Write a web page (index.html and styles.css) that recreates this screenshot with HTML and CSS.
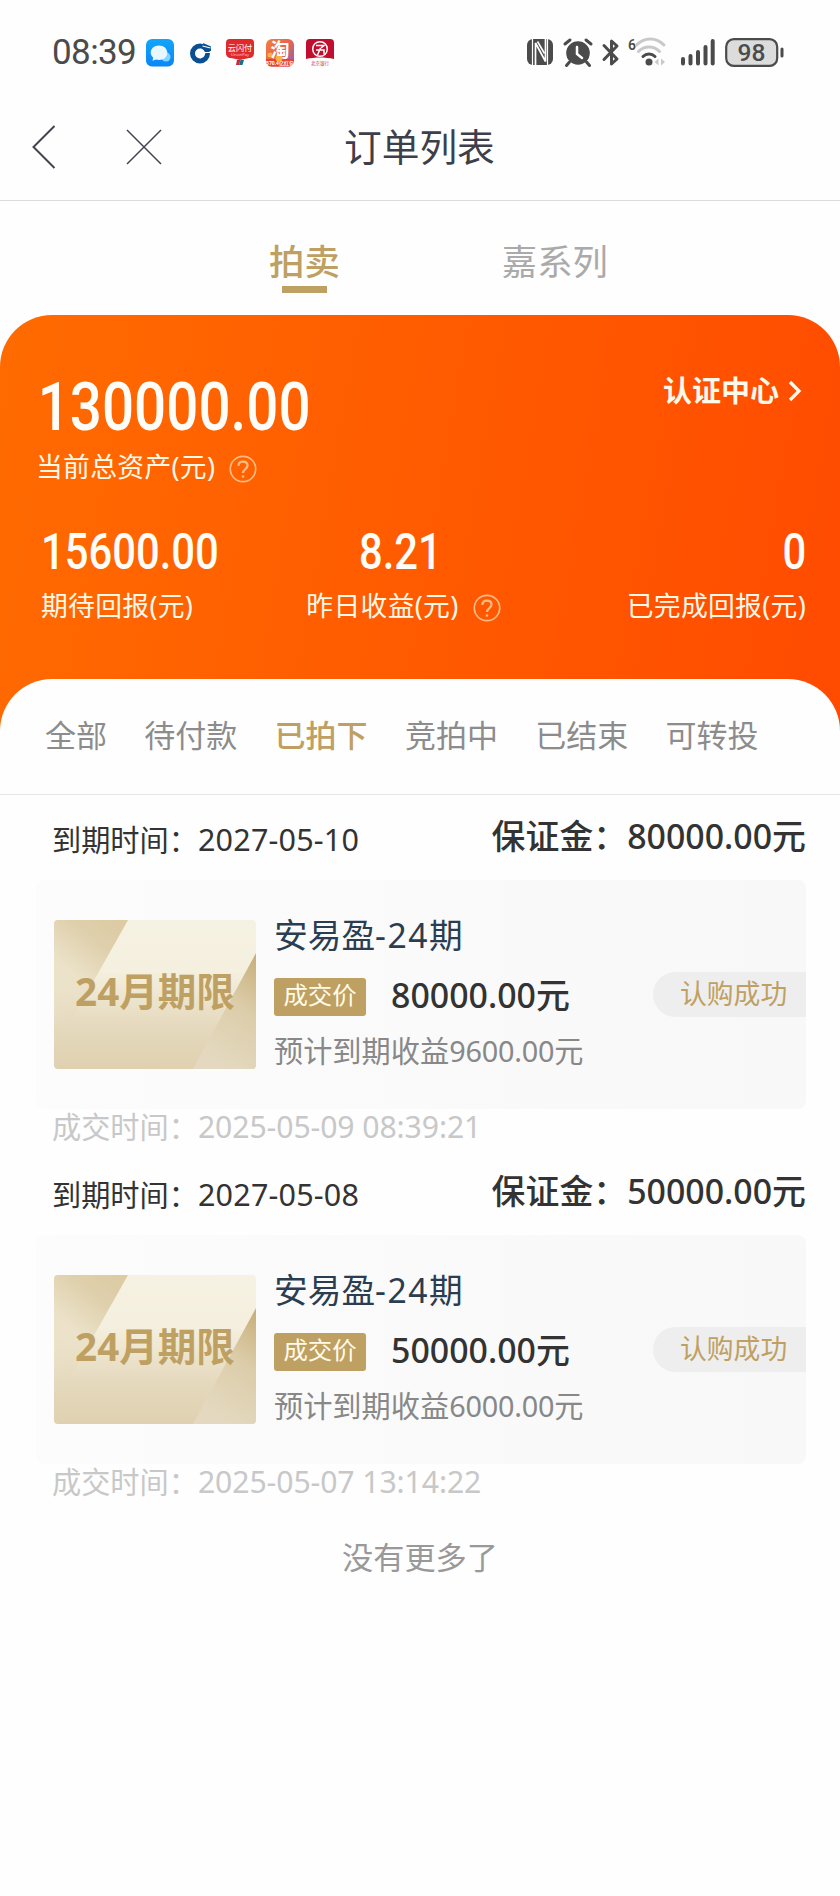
FILE: index.html
```html
<!DOCTYPE html>
<html lang="zh-CN">
<head>
<meta charset="utf-8">
<title>订单列表</title>
<link rel="stylesheet" href="styles.css">
</head>
<body>
<div class="status">
  <span class="clock">08:39</span>
  <svg class="apps" width="190" height="30" viewBox="145 38 190 30">
    <defs>
      <linearGradient id="msg" x1="0" y1="0" x2="0" y2="1"><stop offset="0" stop-color="#12a5fb"/><stop offset="1" stop-color="#0a86f5"/></linearGradient>
      <linearGradient id="tao" x1="0" y1="0" x2="1" y2="1"><stop offset="0" stop-color="#f2803c"/><stop offset=".45" stop-color="#e9654c"/><stop offset="1" stop-color="#8a5fc4"/></linearGradient>
    </defs>
    <rect x="146" y="39" width="28" height="27.500" rx="6" fill="url(#msg)"/>
    <circle cx="166" cy="57" r="4.500" fill="#7ed6ff"/>
    <path d="M159 45.500c5 0 8.300 3.200 8.300 7.300s-3.300 7.200-8.300 7.200c-1 0-1.900-.1-2.800-.4l-3.700 1.200.7-3.200c-1.600-1.300-2.500-3-2.500-4.800 0-4.100 3.300-7.300 8.300-7.300z" fill="#e9f7ff"/>
    <circle cx="200" cy="53.500" r="7.500" fill="none" stroke="#0b4f93" stroke-width="5"/>
    <path d="M200.500 48.500l5 5-5 5-5-5z" fill="#fff"/>
    <path d="M203 43l8 3.500v4.500h-6z" fill="#0b4f93"/>
    <path d="M202.500 46l8 2M204 52.500h7" stroke="#fff" stroke-width="1.100"/>
    <path d="M230 39h20c3 0 4 1.500 4 4v10c0 3.500-2 5-5 5l-9 2-9-2c-3 0-5-1.500-5-5V43c0-2.500 1-4 4-4z" fill="#df2a2c"/>
    <path d="M237 60h3.500l-1.500 5h-3z" fill="#c9283a"/><path d="M240.500 60h3.500l-1.500 5H239z" fill="#16728a"/>
    <text x="240" y="51" text-anchor="middle" font-size="8.200" fill="#fff">云闪付</text>
    <text x="240" y="56" text-anchor="middle" font-size="4" fill="#ffc9c4">UnionPay</text>
    <rect x="266" y="39" width="28" height="27.500" rx="6" fill="url(#tao)"/>
    <path d="M266 59h28v2a5.500 5.500 0 0 1-5.500 5.500h-17A5.500 5.500 0 0 1 266 61z" fill="#e8432b"/>
    <circle cx="279" cy="58" r="3.500" fill="#f9b23f"/><circle cx="270" cy="55" r="2.500" fill="#f9b23f"/>
    <text x="280" y="56.500" text-anchor="middle" font-size="19" font-weight="700" fill="#fff">淘</text>
    <text x="280" y="65" text-anchor="middle" font-size="5" font-weight="700" fill="#fff">570.4亿红包</text>
    <path d="M310 39h20c3 0 4 1.500 4 4v16c-9-2-19-2-28 0V43c0-2.500 1-4 4-4z" fill="#c30d2e"/>
    <circle cx="320" cy="49" r="7.300" fill="none" stroke="#fff" stroke-width="1.500"/>
    <path d="M316 45.500h8l-3 2.500M320.500 48l-3 7M320 50h4v4M316 50h3" fill="none" stroke="#fff" stroke-width="1.500"/>
    <text x="320" y="65" text-anchor="middle" font-size="4.500" fill="#c33">北京银行</text>
  </svg>
  <svg class="sys" width="262" height="32" viewBox="525 36 262 32">
    <rect x="527" y="39" width="26" height="26" rx="6" fill="#4b4b4b"/>
    <path d="M532.500 65V39" stroke="#fff" stroke-width="1.200" fill="none"/>
    <path d="M547.500 39v26" stroke="#fff" stroke-width="1.200" fill="none"/>
    <path d="M535.500 65V43l10 18.500V39" stroke="#fff" stroke-width="1.700" fill="none"/>
    <path d="M537.500 41.500l7 12" stroke="#fff" stroke-width="1.600" fill="none"/>
    <circle cx="578" cy="53" r="11.800" fill="#4b4b4b"/>
    <path d="M565 44l5-4M591 44l-5-4M569.500 62l-3 3.500M586.500 62l3 3.500" stroke="#4b4b4b" stroke-width="3" stroke-linecap="round"/>
    <path d="M577 47v7l5 4" stroke="#fff" stroke-width="2.500" fill="none" stroke-linecap="round"/>
    <path d="M604 45.500l13 13.500-5.500 5V41l5.500 5L604 59.500" stroke="#4b4b4b" stroke-width="3" fill="none" stroke-linejoin="round" stroke-linecap="round"/>
    <text x="628" y="50" font-size="15.500" font-weight="600" fill="#4b4b4b" class="num" textLength="8" lengthAdjust="spacingAndGlyphs">6</text>
    <path d="M637 46a18.500 18.500 0 0 1 27.500 0" transform="translate(-.5 -1)" stroke="#c9c9c9" stroke-width="3" fill="none" stroke-linecap="round"/>
    <path d="M638.500 51.500a14.500 14.500 0 0 1 21 0" stroke="#c9c9c9" stroke-width="3" fill="none" stroke-linecap="round"/>
    <path d="M643 56.500a8.500 8.500 0 0 1 12 0" stroke="#4b4b4b" stroke-width="3" fill="none" stroke-linecap="round"/>
    <circle cx="649" cy="62" r="3.500" fill="#4b4b4b"/>
    <path d="M658.500 58.500v7l-4-3.500zM661 58.500v7l4-3.500z" fill="#c9c9c9"/>
    <path d="M683 59v4.500M690.500 56v7.500M698 52v11.500M705.500 47v16.500M712.700 41v22.500" stroke="#4b4b4b" stroke-width="4" stroke-linecap="round"/>
    <rect x="726.200" y="39.200" width="51" height="26.600" rx="7.500" fill="#dcdcdc" stroke="#4b4b4b" stroke-width="2.200"/>
    <path d="M782 49v7" stroke="#4b4b4b" stroke-width="3" stroke-linecap="round"/>
    <text x="751.500" y="61" text-anchor="middle" font-size="24.500" font-weight="500" fill="#4b4b4b" class="num">98</text>
  </svg>
</div>

<header class="head">
  <svg class="nav" width="136" height="46" viewBox="30 124 136 46">
    <path d="M54.500 126L33.500 147L54.500 168" fill="none" stroke="#44444f" stroke-width="2"/>
    <path d="M127 130l34 34M161 130l-34 34" stroke="#44444f" stroke-width="1.500"/>
  </svg>
  <h1 class="title">订单列表</h1>
</header>

<nav class="tabs">
  <span class="tab tab-on">拍卖</span>
  <span class="tab">嘉系列</span>
</nav>

<section class="assets">
  <div class="total">
    <div>
      <div class="big">130000.00</div>
      <div class="cap">当前总资产(元)<svg class="help" width="28" height="28" viewBox="0 0 28 28"><circle cx="14" cy="14" r="12.700"/><path d="M9.300 10.800c.2-2.700 2-4.200 4.600-4.200 2.700 0 4.600 1.600 4.600 4 0 3.400-4.500 3.900-4.500 7.300"/><circle class="dot" cx="14" cy="21.500" r="1.300"/></svg></div>
    </div>
    <div class="cert">认证中心<svg width="14" height="22" viewBox="0 0 14 22"><path d="M2 2l9 9-9 9" fill="none" stroke="#fff8ec" stroke-width="3.300"/></svg></div>
  </div>
  <div class="stats">
    <div class="stat s1"><div class="mid">15600.00</div><div class="cap">期待回报(元)</div></div>
    <div class="stat s2"><div class="mid">8.21</div><div class="cap">昨日收益(元)<svg class="help" width="28" height="28" viewBox="0 0 28 28"><circle cx="14" cy="14" r="12.700"/><path d="M9.300 10.800c.2-2.700 2-4.200 4.600-4.200 2.700 0 4.600 1.600 4.600 4 0 3.400-4.500 3.900-4.500 7.300"/><circle class="dot" cx="14" cy="21.500" r="1.300"/></svg></div></div>
    <div class="stat s3"><div class="mid">0</div><div class="cap">已完成回报(元)</div></div>
  </div>
</section>

<nav class="filters">
  <span>全部</span><span>待付款</span><span class="on">已拍下</span><span>竞拍中</span><span>已结束</span><span>可转投</span>
</nav>

<main class="list">
  <article class="order">
    <div class="row">
      <span class="due">到期时间：<b class="d">2027-05-10</b></span>
      <span class="dep">保证金：<b class="d">80000.00</b>元</span>
    </div>
    <div class="card">
      <div class="thumb"><svg class="art" width="202" height="149" viewBox="0 0 202 149"><use href="#art"/></svg><span>24月期限</span></div>
      <div class="info">
        <div class="name">安易盈<b class="d">-24</b>期</div>
        <div class="deal"><span class="tag">成交价</span><span class="price"><b class="d">80000.00</b>元</span></div>
        <div class="est">预计到期收益<b class="d">9600.00</b>元</div>
      </div>
      <span class="state">认购成功</span>
    </div>
    <div class="time">成交时间：<b class="d">2025-05-09 08:39:21</b></div>
  </article>
  <article class="order">
    <div class="row">
      <span class="due">到期时间：<b class="d">2027-05-08</b></span>
      <span class="dep">保证金：<b class="d">50000.00</b>元</span>
    </div>
    <div class="card">
      <div class="thumb"><svg class="art" width="202" height="149" viewBox="0 0 202 149"><use href="#art"/></svg><span>24月期限</span></div>
      <div class="info">
        <div class="name">安易盈<b class="d">-24</b>期</div>
        <div class="deal"><span class="tag">成交价</span><span class="price"><b class="d">50000.00</b>元</span></div>
        <div class="est">预计到期收益<b class="d">6000.00</b>元</div>
      </div>
      <span class="state">认购成功</span>
    </div>
    <div class="time">成交时间：<b class="d">2025-05-07 13:14:22</b></div>
  </article>
  <p class="end">没有更多了</p>
</main>

<svg class="defs" width="0" height="0">
  <defs>
    <linearGradient id="ga" x1="0" y1="0" x2="0" y2="1"><stop offset="0" stop-color="#f6f2e3"/><stop offset=".35" stop-color="#f4efde"/><stop offset=".72" stop-color="#e5d9bd"/><stop offset="1" stop-color="#dfd1b0"/></linearGradient>
    <linearGradient id="gb" x1=".85" y1="0" x2=".35" y2="1"><stop offset="0" stop-color="#dccba3"/><stop offset=".25" stop-color="#dfd0ac"/><stop offset=".6" stop-color="#ebe2c9"/><stop offset="1" stop-color="#e2d5b6" stop-opacity="0"/></linearGradient>
    <linearGradient id="gc" x1=".9" y1="0" x2=".5" y2="1"><stop offset="0" stop-color="#c8b07c"/><stop offset=".45" stop-color="#dccdaa"/><stop offset="1" stop-color="#e4d9c0"/></linearGradient>
    <g id="art">
      <path d="M0 0h202v149H0z" fill="url(#ga)"/>
      <path d="M0 0h74L12 110 0 120z" fill="url(#gb)"/>
      <path d="M202 33v116h-63z" fill="url(#gc)"/>
    </g>
  </defs>
</svg>
</body>
</html>
```
FILE: styles.css
```css
* { box-sizing: border-box; }
body {
  margin: 0;
  width: 840px;
  height: 1896px;
  background: #fefefe;
  color: #333;
  font-family: "Noto Sans", "Noto Sans CJK SC", sans-serif;
  overflow: hidden;
}
svg { display: block; flex: none; }
.defs { height: 0; }
.num { font-family: Roboto, sans-serif; }

.status { display: flex; height: 94px; padding: 0 0 0 52px; }
.clock { width: 93px; padding-top: 32px; font: 400 35px/42px Roboto, sans-serif; letter-spacing: -.6px; color: #4b4b4b; white-space: nowrap; }
.apps { margin-top: 38px; }
.sys { margin: 36px 0 0 190px; }

.head { display: flex; align-items: center; height: 107px; padding-left: 30px; border-bottom: 1px solid #dcdcdc; }
.title { margin: 0 0 0 178px; font-size: 37.7px; font-weight: 400; line-height: 50px; color: #3f3f4b; }

.tabs { display: flex; height: 114px; padding: 40px 0 0 269px; gap: 162px; }
.tab { font-size: 35.4px; line-height: 40px; color: #aaa; }
.tab-on { color: #bfa063; font-weight: 500; }
.tab-on::after { content: ""; display: block; width: 45px; height: 7px; margin: 5px auto 0; background: #bfa063; }

.assets {
  height: 430px;
  padding: 55px 34px 0 36px;
  border-radius: 52px 52px 0 0;
  background: linear-gradient(100deg, #ff6b00, #ff4b00);
  color: #fff9e9;
}
.total { display: flex; justify-content: space-between; }
.big, .mid { font-family: Roboto, sans-serif; font-weight: 500; color: #fffdf8; transform-origin: 0 50%; white-space: nowrap; }
.big { font-size: 67px; line-height: 74px; height: 72px; transform: scaleX(.844); padding-left: 2px; width: 330px; }
.cap { display: flex; align-items: center; font-size: 26.8px; line-height: 30px; letter-spacing: .3px; white-space: nowrap; }
.total .cap { margin-top: 10px; }
.help { margin-left: 14px; fill: none; stroke: #ffbd85; stroke-width: 1.700; position: relative; top: 2px; }
.help path { stroke-width: 2.300; }
.dot { fill: #ffbd85; stroke: none; }
.cert { display: flex; align-items: center; height: 30px; margin-top: 6px; font-size: 29px; font-weight: 700; line-height: 30px; gap: 9px; padding-right: 4px; }
.stats { display: flex; margin-top: 43px; height: 110px; justify-content: space-between; padding-left: 5px; }
.mid { font-size: 50px; line-height: 54px; margin-bottom: 12px; transform: scaleX(.835); }
.s1 .mid { width: 150px; }
.s2 { margin-left: -13px; }
.s2 .mid { width: 100px; margin-left: 53px; }
.s3 .mid { text-align: right; transform-origin: 100% 50%; }

.filters {
  position: relative;
  display: flex;
  gap: 37.300px;
  height: 116px;
  margin-top: -66px;
  padding: 36px 0 0 45px;
  border-radius: 52px 52px 0 0;
  border-bottom: 1px solid #e6e6e6;
  background: #fefefe;
  font-size: 31px;
  line-height: 40px;
  color: #8c8c8c;
}
.filters .on { color: #bfa063; font-weight: 500; }

.list { display: flex; flex-direction: column; }
.order { height: 355px; padding: 0 34px 0 36px; }
.d { font-weight: inherit; line-height: 1; }
.row { display: flex; justify-content: space-between; height: 85px; padding-left: 16px; white-space: nowrap; }
.due { font-size: 29.200px; line-height: 40px; padding-top: 25px; }
.due .d { font-size: 30.500px; letter-spacing: .2px; }
.dep { font-size: 33.900px; line-height: 40px; padding-top: 21px; font-weight: 500; }
.card {
  display: flex;
  height: 229px;
  padding: 40px 0 0 18px;
  border-radius: 8px;
  background: linear-gradient(90deg, #fcfcfc, #f8f8f8);
}
.thumb { display: grid; width: 202px; height: 149px; border-radius: 4px; overflow: hidden; }
.thumb > * { grid-area: 1 / 1; min-width: 0; }
.thumb span { z-index: 1; padding-top: 51px; text-align: center; font-size: 38.600px; line-height: 40px; font-weight: 700; color: #bfa063; white-space: nowrap; }
.info { margin-left: 18px; width: 360px; white-space: nowrap; }
.name { font-size: 33.700px; line-height: 32px; color: #2b3d50; }
.name .d { letter-spacing: 1.500px; }
.deal { display: flex; height: 38px; margin-top: 27px; }
.info .name { height: 32px; overflow: visible; margin-top: -1px; }
.deal { margin-top: 28px; }
.tag { width: 92px; height: 38px; border-radius: 3px; background: #bfa063; color: #fffbe8; font-size: 24.400px; line-height: 33px; text-align: center; }
.price { margin-left: 25px; font-size: 33.900px; font-weight: 500; line-height: 34px; }
.info .deal { position: relative; top: -1px; }
.est { margin-top: 14px; font-size: 29.200px; line-height: 40px; color: #888; }
.est .d { font-size: 28.800px; letter-spacing: -.2px; }
.state { width: 153px; height: 45px; margin: 52px 0 0 auto; padding-left: 27px; border-radius: 23px 0 0 23px; background: #eee; color: #bfa063; font-size: 26.800px; line-height: 44px; }
.time { padding-left: 16px; font-size: 29.200px; line-height: 36px; color: #c8c8c8; white-space: nowrap; }
.time .d { font-size: 30.200px; letter-spacing: -.1px; }
.end { margin: 32px 0 0; text-align: center; font-size: 31.200px; line-height: 40px; color: #999; }
```
